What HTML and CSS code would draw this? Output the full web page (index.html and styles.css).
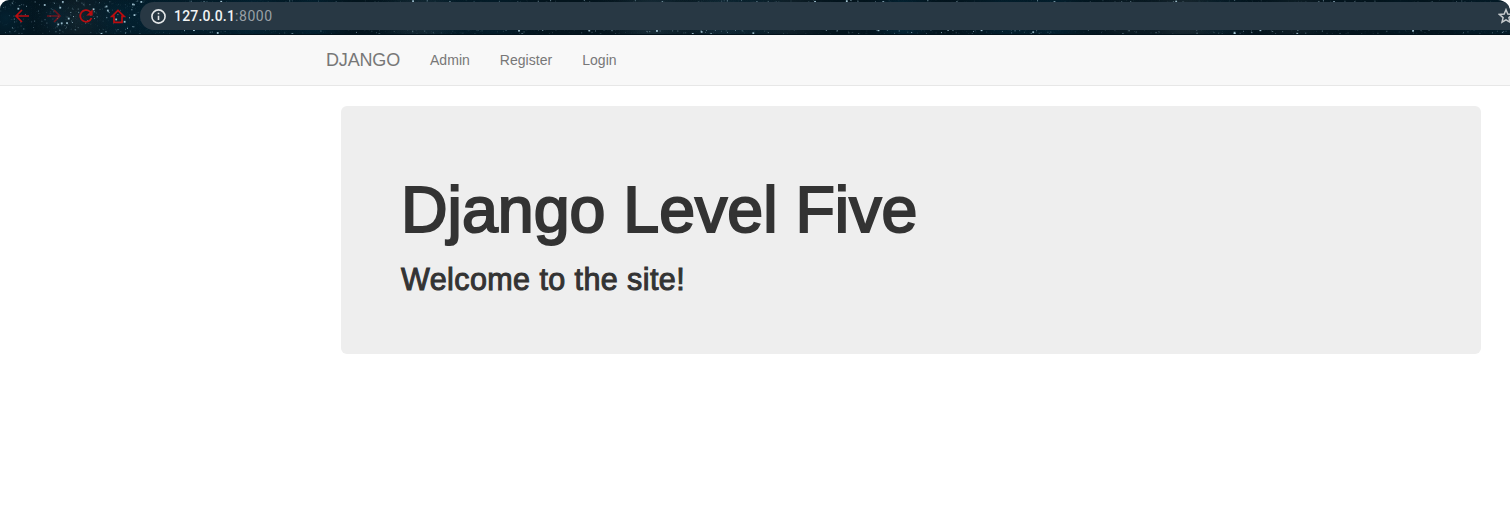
FILE: index.html
```html
<!DOCTYPE html>
<html lang="en">
<head>
<meta charset="utf-8">
<title>Django Level Five</title>
<link rel="stylesheet" href="styles.css">
</head>
<body>
<header class="browser">
  <canvas class="stars" width="1510" height="35"></canvas>
  <div class="controls">
    <svg class="icon" viewBox="0 0 16 16"><path d="M15 8H2.5M8 2L2 8l6 6"/></svg>
    <svg class="icon dim" viewBox="0 0 16 16"><path d="M1 8h12.5M8 2l6 6-6 6"/></svg>
    <svg class="icon" viewBox="0 0 16 16"><path d="M13.5 10A5.8 5.8 0 1 1 12 3.7l1.5 1.5"/><path class="solid" d="M14.7 1.2v6.3H8.4z"/></svg>
    <svg class="icon" viewBox="0 0 16 16"><path d="M8 2.4L2 8.3h2v6h8v-6h2z"/></svg>
  </div>
  <div class="address">
    <svg class="info" viewBox="0 0 16 16"><circle cx="8" cy="8" r="6.2"/><path d="M8 7.2v4M8 4.4v1.5"/></svg>
    <span class="url"><b class="host">127.0.0.1</b>:8000</span>
    <svg class="bookmark" viewBox="0 0 16 16"><path d="M8 1.7l1.8 4.4 4.7.4-3.6 3.1 1.1 4.6L8 11.8l-4 2.4 1.1-4.6-3.6-3.1 4.7-.4z"/></svg>
  </div>
</header>
<nav class="navbar">
  <a class="brand">DJANGO</a>
  <a class="link">Admin</a>
  <a class="link">Register</a>
  <a class="link">Login</a>
</nav>
<main class="container">
  <section class="jumbotron">
    <h1 class="title">Django Level Five</h1>
    <h2 class="subtitle">Welcome to the site!</h2>
  </section>
</main>
<script src="stars.js"></script>
</body>
</html>
```

FILE: styles.css
```css
* { box-sizing: border-box; }
body { margin: 0; background: #fff; font-family: "Liberation Sans", Arial, sans-serif; color: #333; }
.browser {
  position: relative; display: flex; height: 35px; padding-top: 2px; overflow: hidden;
  border-radius: 9px 12px 0 0; background: #03141d;
}
.stars { position: absolute; left: 0; top: 0; }
.controls { position: relative; display: flex; gap: 16px; width: 140px; padding: 6px 0 0 14px; }
.icon { width: 16px; height: 16px; flex: none; fill: none; stroke: #b90d10; stroke-width: 1.7; }
.dim { opacity: .55; }
.solid { fill: #b90d10; stroke: none; }
.address {
  position: relative; display: flex; align-items: center; flex: 1; height: 28px;
  padding-left: 10px; border-radius: 14px 0 0 14px; background: #283844;
}
.info { width: 17px; height: 17px; flex: none; fill: none; stroke: #e4e7e9; stroke-width: 1.5; }
.url { margin-left: 7px; font: 14px Roboto, sans-serif; letter-spacing: .55px; color: #99a1a7; }
.host { font-weight: 500; letter-spacing: .18px; color: #f1f3f4; }
.bookmark { width: 16px; height: 16px; flex: none; margin: 0 -4px 0 auto; fill: none; stroke: #c5c9cc; stroke-width: 1.5; }
.navbar {
  display: flex; align-items: center; height: 51px; padding: 0 0 1px 326px;
  background: #f8f8f8; border-bottom: 1px solid #e7e7e7; color: #777;
}
.brand { font-size: 18px; letter-spacing: -.17px; margin-right: 30px; padding-top: 2px; }
.link { font-size: 14px; letter-spacing: .03px; margin-right: 30px; }
.container { padding: 20px 29px 0 341px; }
.jumbotron { height: 248px; padding: 68px 60px 0; border-radius: 6px; background: #eee; }
.title, .subtitle { margin: 0; font-weight: 400; white-space: nowrap; }
.title { font-size: 64.5px; line-height: 72px; -webkit-text-stroke: 2.1px #333; }
.subtitle { margin-top: 17px; font-size: 30.5px; line-height: 33px; letter-spacing: .42px; -webkit-text-stroke: 1px #333; }
```

FILE: stars.js
```js
const canvas = document.querySelector(".stars");
const ctx = canvas.getContext("2d");
let seed = 42;
function random() {
  seed = (seed + 0x6d2b79f5) | 0;
  let t = Math.imul(seed ^ (seed >>> 15), 1 | seed);
  t = (t + Math.imul(t ^ (t >>> 7), 61 | t)) ^ t;
  return ((t ^ (t >>> 14)) >>> 0) / 4294967296;
}
for (let i = 0; i < 40; i++) {
  const x = random() * 1510, r = 25 + random() * 50;
  const glow = ctx.createRadialGradient(x, 18, 0, x, 18, r);
  glow.addColorStop(0, random() > 0.3 ? "rgba(5,65,96,.3)" : "rgba(70,80,85,.3)");
  glow.addColorStop(1, "rgba(0,20,30,0)");
  ctx.fillStyle = glow;
  ctx.fillRect(0, 0, 1510, 35);
}
for (let i = 0; i < 7500; i++) {
  const light = random();
  ctx.fillStyle = `rgba(175,210,225,${0.03 + light ** 7 * 0.9})`;
  const size = light > 0.975 ? 1.8 : 1;
  ctx.fillRect(random() * 1510, random() * 35, size, size);
}
ctx.fillStyle = "#02111a";
ctx.fillRect(0, 34, 1510, 1);
```
